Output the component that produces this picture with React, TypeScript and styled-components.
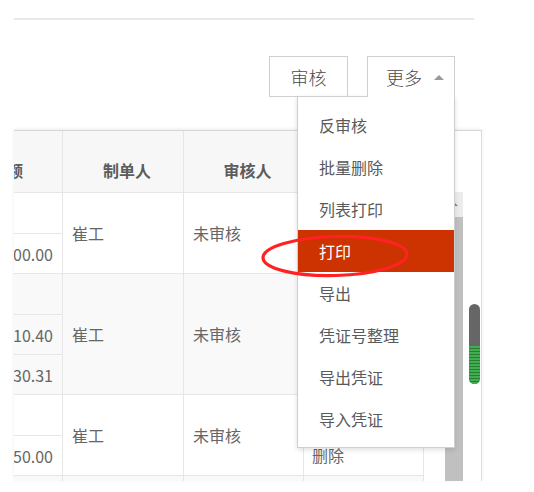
import styled, { createGlobalStyle } from 'styled-components';

const GlobalStyle = createGlobalStyle`
  html, body {
    margin: 0;
    padding: 0;
    background: #fff;
  }
  body {
    font-family: "Noto Sans CJK SC", "Liberation Sans", sans-serif;
    color: #555;
    overflow: hidden;
  }
`;

interface Row {
  amounts: string[];
  maker: string;
  status: string;
  shaded?: boolean;
}

const rows: Row[] = [
  { amounts: ['', '3,000.00'], maker: '崔工', status: '未审核' },
  { amounts: ['', '1,210.40', '1,030.31'], maker: '崔工', status: '未审核', shaded: true },
  { amounts: ['', '2,350.00'], maker: '崔工', status: '未审核' },
  { amounts: ['', '1,800.00'], maker: '崔工', status: '未审核', shaded: true },
];

const menuItems = ['反审核', '批量删除', '列表打印', '打印', '导出', '凭证号整理', '导出凭证', '导入凭证'];

export default function App() {
  return (
    <>
      <GlobalStyle />
      <Page>
        <TopRule />
        <Toolbar>
          <ToolButton $width={79}>审核</ToolButton>
          <MoreWrap>
            <MoreButton>
              更多
              <Caret />
            </MoreButton>
            <Menu>
              {menuItems.map((item) => (
                <MenuItem key={item} $active={item === '打印'}>
                  {item}
                </MenuItem>
              ))}
            </Menu>
          </MoreWrap>
        </Toolbar>

        <TableBox>
          <TableClip>
            <Grid>
              <HeadRow>
                <HeadCell $width={119}>金额</HeadCell>
                <HeadCell $width={121}>制单人</HeadCell>
                <HeadCell $width={120}>审核人</HeadCell>
                <HeadCell $width={120}>操作</HeadCell>
              </HeadRow>
              {rows.map((row, i) => (
                <BodyRow key={i} $shaded={row.shaded}>
                  <AmountCol>
                    {row.amounts.map((a, j) => (
                      <SubCell key={j}>{a}</SubCell>
                    ))}
                  </AmountCol>
                  <TextCell $width={121}>{row.maker}</TextCell>
                  <TextCell $width={120}>{row.status}</TextCell>
                  <ActionCell>
                    <span>查看</span>
                    <span>修改</span>
                    <span>删除</span>
                  </ActionCell>
                </BodyRow>
              ))}
            </Grid>
          </TableClip>
          <ScrollTrack>
            <ArrowBox>
              <UpArrow />
            </ArrowBox>
            <Thumb />
          </ScrollTrack>
          <Gutter>
            <Pill>
              <PillGreen />
            </Pill>
          </Gutter>
        </TableBox>

        <Mark width="152" height="48" viewBox="0 0 152 48">
          <ellipse
            cx="75"
            cy="23"
            rx="72"
            ry="19.5"
            fill="none"
            stroke="#ff2222"
            strokeWidth="3.2"
            transform="rotate(-1.5 75 23)"
          />
        </Mark>
      </Page>
    </>
  );
}

const Page = styled.div`
  position: relative;
  width: 534px;
  height: 492px;
  overflow: hidden;
  padding-top: 18px;
  box-sizing: border-box;
`;

const TopRule = styled.div`
  height: 2px;
  margin: 0 60px 0 14px;
  background: #e8e8e8;
`;

const Toolbar = styled.div`
  margin-top: 36px;
  padding-right: 79px;
  display: flex;
  justify-content: flex-end;
  gap: 19px;
`;

const ToolButton = styled.div<{ $width: number }>`
  width: ${(p) => p.$width}px;
  height: 41px;
  box-sizing: border-box;
  border: 1px solid #cfcfcf;
  background: #fff;
  color: #4a4a4a;
  font-size: 18px;
  font-weight: 300;
  display: flex;
  align-items: center;
  justify-content: center;
`;

const MoreWrap = styled.div`
  position: relative;
`;

const MoreButton = styled.div`
  position: relative;
  z-index: 3;
  width: 88px;
  height: 41px;
  box-sizing: border-box;
  border: 1px solid #cfcfcf;
  border-bottom: none;
  background: #fff;
  color: #4a4a4a;
  font-size: 18px;
  font-weight: 300;
  padding-left: 18px;
  display: flex;
  align-items: center;
  gap: 12px;
`;

const Caret = styled.span`
  width: 0;
  height: 0;
  border-left: 5px solid transparent;
  border-right: 5px solid transparent;
  border-bottom: 5px solid #9a9a9a;
`;

const Menu = styled.div`
  position: absolute;
  top: 40px;
  right: 0;
  z-index: 2;
  width: 158px;
  box-sizing: border-box;
  padding: 7px 0;
  background: #fff;
  border: 1px solid #cfcfcf;
  box-shadow: 0 2px 5px rgba(0, 0, 0, 0.12);
`;

const MenuItem = styled.div<{ $active?: boolean }>`
  height: 42px;
  line-height: 42px;
  padding-left: 21px;
  font-size: 16px;
  color: ${(p) => (p.$active ? '#fff' : '#5a5a5a')};
  background: ${(p) => (p.$active ? '#cc3300' : 'transparent')};
  white-space: nowrap;
`;

const TableBox = styled.div`
  margin: 33px 0 0 14px;
  width: 468px;
  height: 351px;
  box-sizing: border-box;
  border-top: 1px solid #d6d6d6;
  border-right: 1px solid #dcdcdc;
  box-shadow: 0 -1px 3px rgba(0, 0, 0, 0.08);
  display: flex;
`;

const TableClip = styled.div`
  width: 431px;
  flex-shrink: 0;
  overflow: hidden;
`;

const Grid = styled.div`
  margin-left: -70px;
  width: 480px;
  font-size: 16px;
  color: #666;
`;

const HeadRow = styled.div`
  display: flex;
  height: 62px;
  box-sizing: border-box;
  background: #f7f7f7;
  border-bottom: 1px solid #e6e6e6;
`;

const HeadCell = styled.div<{ $width: number }>`
  width: ${(p) => p.$width}px;
  box-sizing: border-box;
  border-right: 1px solid #e6e6e6;
  padding: 17px 0 0 8px;
  font-weight: bold;
  color: #5c5c5c;
  display: flex;
  align-items: center;
  justify-content: center;
`;

const BodyRow = styled.div<{ $shaded?: boolean }>`
  display: flex;
  border-bottom: 1px solid #e6e6e6;
  background: ${(p) => (p.$shaded ? '#f9f9f9' : '#fff')};
`;

const AmountCol = styled.div`
  width: 119px;
  box-sizing: border-box;
  border-right: 1px solid #e6e6e6;
  display: flex;
  flex-direction: column;
`;

const SubCell = styled.div`
  height: 39px;
  padding-right: 9px;
  border-top: 1px solid #e6e6e6;
  display: flex;
  align-items: center;
  justify-content: flex-end;

  &:first-child {
    height: 40px;
    border-top: none;
  }
`;

const TextCell = styled.div<{ $width: number }>`
  width: ${(p) => p.$width}px;
  box-sizing: border-box;
  border-right: 1px solid #e6e6e6;
  padding-left: 9px;
  display: flex;
  align-items: center;
`;

const ActionCell = styled.div`
  width: 120px;
  box-sizing: border-box;
  border-right: 1px solid #e6e6e6;
  padding: 0 0 2px 8px;
  display: flex;
  flex-direction: column;
  justify-content: center;
  line-height: 21px;
`;

const ScrollTrack = styled.div`
  width: 18px;
  flex-shrink: 0;
  margin-top: 61px;
  display: flex;
  flex-direction: column;
`;

const ArrowBox = styled.div`
  height: 25px;
  background: #ececec;
  display: flex;
  justify-content: center;
  padding-top: 10px;
  box-sizing: border-box;
`;

const UpArrow = styled.span`
  width: 0;
  height: 0;
  border-left: 4px solid transparent;
  border-right: 4px solid transparent;
  border-bottom: 4px solid #888;
`;

const Thumb = styled.div`
  flex: 1;
  background: #c0c0c0;
`;

const Gutter = styled.div`
  flex: 1;
  padding: 173px 0 0 6px;
`;

const Pill = styled.div`
  width: 11px;
  height: 80px;
  border-radius: 6px;
  background: #666;
  overflow: hidden;
  display: flex;
  flex-direction: column;
  justify-content: flex-end;
`;

const PillGreen = styled.div`
  height: 38px;
  background: repeating-linear-gradient(
    to bottom,
    #3fae4f 0,
    #3fae4f 2px,
    #2a7d37 2px,
    #2a7d37 3px
  );
`;

const Mark = styled.svg`
  position: absolute;
  left: 260px;
  top: 233px;
  z-index: 5;
  pointer-events: none;
`;
